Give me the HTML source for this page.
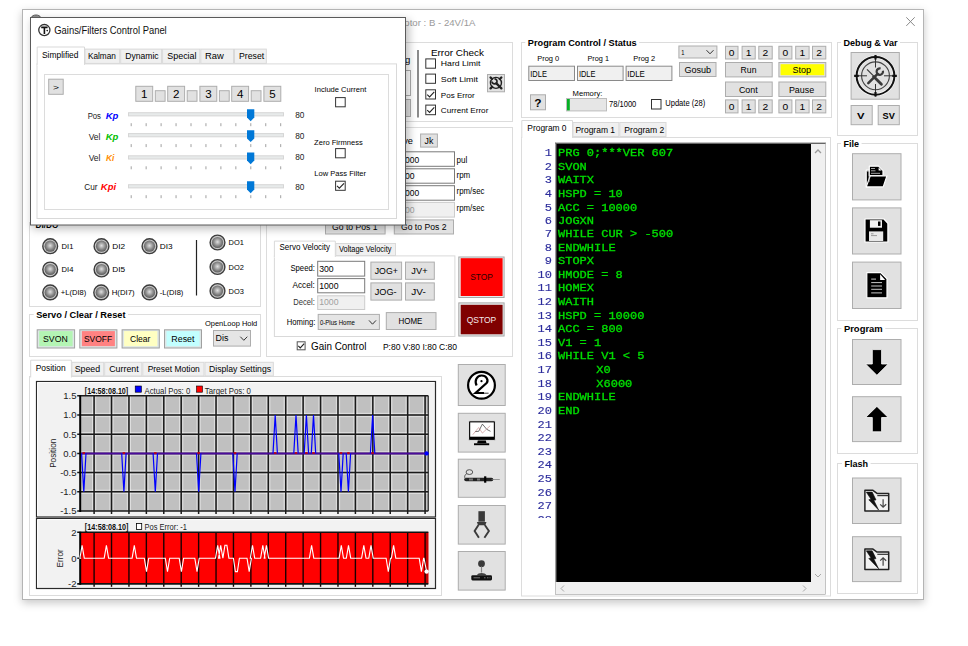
<!DOCTYPE html>
<html><head><meta charset="utf-8"><title>UI</title>
<style>
*{box-sizing:border-box;margin:0;padding:0}
html,body{width:968px;height:646px;overflow:hidden;background:#fff;font-family:"Liberation Sans",sans-serif}
svg{position:absolute;left:0;top:0}
pre{position:absolute;margin:0}
</style></head><body>
<svg width="968" height="646" viewBox="0 0 968 646" font-family="Liberation Sans, sans-serif">
<defs><filter id="sh" x="-10%" y="-10%" width="120%" height="120%"><feGaussianBlur stdDeviation="4"/></filter><filter id="sh2" x="-20%" y="-20%" width="140%" height="140%"><feGaussianBlur stdDeviation="4"/></filter><radialGradient id="led" cx="0.5" cy="0.45" r="0.55"><stop offset="0" stop-color="#e0e0e0"/><stop offset="0.6" stop-color="#8c8c8c"/><stop offset="1" stop-color="#5a5a5a"/></radialGradient></defs>
<rect x="22.00" y="12.00" width="902.00" height="591.00" fill="rgba(0,0,0,0.22)" filter="url(#sh)"/>
<rect x="22.50" y="9.50" width="901.00" height="590.00" fill="#fff" stroke="#b4b4b4" stroke-width="1" />
<text x="404.30" y="26.10" font-size="9.92" fill="#9a9a9a" textLength="71.19" lengthAdjust="spacingAndGlyphs">otor : B - 24V/1A</text>
<line x1="906.30" y1="17.30" x2="914.70" y2="25.90" stroke="#8a8a8a" stroke-width="1.0" />
<line x1="914.70" y1="17.30" x2="906.30" y2="25.90" stroke="#8a8a8a" stroke-width="1.0" />
<rect x="266.50" y="42.50" width="246.00" height="79.00" fill="none" stroke="#dcdcdc" stroke-width="1" />
<line x1="418.00" y1="50.00" x2="418.00" y2="117.50" stroke="#5a5a5a" stroke-width="1.4" />
<rect x="395.00" y="70.50" width="15.50" height="25.00" fill="#fff" stroke="#adadad" stroke-width="1" />
<rect x="395.00" y="99.50" width="15.50" height="17.00" fill="#e1e1e1" stroke="#adadad" stroke-width="1" />
<text x="405.12" y="63.20" font-size="9.50" fill="#000">g</text>
<text x="430.94" y="55.80" font-size="9.22" fill="#000" textLength="53.02" lengthAdjust="spacingAndGlyphs">Error Check</text>
<rect x="425.80" y="58.90" width="9.70" height="9.30" fill="#fff" stroke="#333" stroke-width="1" />
<text x="440.83" y="66.40" font-size="7.40" fill="#000" textLength="39.54" lengthAdjust="spacingAndGlyphs">Hard Limit</text>
<rect x="425.80" y="74.10" width="9.70" height="9.20" fill="#fff" stroke="#333" stroke-width="1" />
<text x="440.83" y="81.60" font-size="7.40" fill="#000" textLength="37.14" lengthAdjust="spacingAndGlyphs">Soft Limit</text>
<rect x="425.80" y="89.80" width="9.70" height="9.20" fill="#fff" stroke="#333" stroke-width="1" />
<polyline points="427.23,94.60 429.58,96.85 434.29,91.95" fill="none" stroke="#222" stroke-width="1.1"/>
<text x="440.83" y="97.50" font-size="7.40" fill="#000" textLength="33.94" lengthAdjust="spacingAndGlyphs">Pos Error</text>
<rect x="425.80" y="105.10" width="9.70" height="9.60" fill="#fff" stroke="#333" stroke-width="1" />
<polyline points="427.23,110.11 429.58,112.44 434.29,107.36" fill="none" stroke="#222" stroke-width="1.1"/>
<text x="440.83" y="112.80" font-size="7.40" fill="#000" textLength="47.54" lengthAdjust="spacingAndGlyphs">Current Error</text>
<rect x="487.50" y="74.50" width="17.00" height="17.30" fill="#e1e1e1" stroke="#adadad" stroke-width="1" />
<rect x="29.50" y="222.50" width="231.00" height="84.00" fill="none" stroke="#dcdcdc" stroke-width="1" />
<text x="35.61" y="227.60" font-size="9.78" font-weight="bold" fill="#000" textLength="22.68" lengthAdjust="spacingAndGlyphs">DI/DO</text>
<line x1="196.50" y1="240.00" x2="196.50" y2="295.50" stroke="#222" stroke-width="1.2" />
<circle cx="50.2" cy="246.2" r="7.4" fill="#c8c8c8" stroke="#3c3c3c" stroke-width="1.4"/>
<circle cx="50.2" cy="246.2" r="5.6" fill="url(#led)"/>
<text x="61.62" y="248.80" font-size="7.68" fill="#000" textLength="11.87" lengthAdjust="spacingAndGlyphs">DI1</text>
<circle cx="101.5" cy="246.2" r="7.4" fill="#c8c8c8" stroke="#3c3c3c" stroke-width="1.4"/>
<circle cx="101.5" cy="246.2" r="5.6" fill="url(#led)"/>
<text x="112.32" y="248.80" font-size="7.68" fill="#000" textLength="12.87" lengthAdjust="spacingAndGlyphs">DI2</text>
<circle cx="149.5" cy="246.2" r="7.4" fill="#c8c8c8" stroke="#3c3c3c" stroke-width="1.4"/>
<circle cx="149.5" cy="246.2" r="5.6" fill="url(#led)"/>
<text x="159.82" y="248.80" font-size="7.68" fill="#000" textLength="12.87" lengthAdjust="spacingAndGlyphs">DI3</text>
<circle cx="50.2" cy="269.5" r="7.4" fill="#c8c8c8" stroke="#3c3c3c" stroke-width="1.4"/>
<circle cx="50.2" cy="269.5" r="5.6" fill="url(#led)"/>
<text x="61.62" y="271.80" font-size="7.68" fill="#000" textLength="11.87" lengthAdjust="spacingAndGlyphs">DI4</text>
<circle cx="101.5" cy="269.5" r="7.4" fill="#c8c8c8" stroke="#3c3c3c" stroke-width="1.4"/>
<circle cx="101.5" cy="269.5" r="5.6" fill="url(#led)"/>
<text x="112.32" y="271.80" font-size="7.68" fill="#000" textLength="12.87" lengthAdjust="spacingAndGlyphs">DI5</text>
<circle cx="50.2" cy="292.4" r="7.4" fill="#c8c8c8" stroke="#3c3c3c" stroke-width="1.4"/>
<circle cx="50.2" cy="292.4" r="5.6" fill="url(#led)"/>
<text x="60.82" y="295.00" font-size="7.68" fill="#000" textLength="25.37" lengthAdjust="spacingAndGlyphs">+L(DI8)</text>
<circle cx="101.2" cy="292.4" r="7.4" fill="#c8c8c8" stroke="#3c3c3c" stroke-width="1.4"/>
<circle cx="101.2" cy="292.4" r="5.6" fill="url(#led)"/>
<text x="111.72" y="295.00" font-size="7.68" fill="#000" textLength="22.87" lengthAdjust="spacingAndGlyphs">H(DI7)</text>
<circle cx="149.5" cy="292.4" r="7.4" fill="#c8c8c8" stroke="#3c3c3c" stroke-width="1.4"/>
<circle cx="149.5" cy="292.4" r="5.6" fill="url(#led)"/>
<text x="159.82" y="295.00" font-size="7.68" fill="#000" textLength="23.57" lengthAdjust="spacingAndGlyphs">-L(DI8)</text>
<circle cx="217.5" cy="242.5" r="7.4" fill="#c8c8c8" stroke="#3c3c3c" stroke-width="1.4"/>
<circle cx="217.5" cy="242.5" r="5.6" fill="url(#led)"/>
<text x="228.62" y="245.10" font-size="7.68" fill="#000" textLength="15.27" lengthAdjust="spacingAndGlyphs">DO1</text>
<circle cx="217.5" cy="267" r="7.4" fill="#c8c8c8" stroke="#3c3c3c" stroke-width="1.4"/>
<circle cx="217.5" cy="267" r="5.6" fill="url(#led)"/>
<text x="228.62" y="269.90" font-size="7.68" fill="#000" textLength="15.27" lengthAdjust="spacingAndGlyphs">DO2</text>
<circle cx="217.5" cy="291" r="7.4" fill="#c8c8c8" stroke="#3c3c3c" stroke-width="1.4"/>
<circle cx="217.5" cy="291" r="5.6" fill="url(#led)"/>
<text x="228.62" y="293.60" font-size="7.68" fill="#000" textLength="15.27" lengthAdjust="spacingAndGlyphs">DO3</text>
<rect x="29.50" y="314.50" width="231.00" height="42.00" fill="none" stroke="#dcdcdc" stroke-width="1" />
<rect x="33.70" y="313.00" width="94.30" height="3.00" fill="#fff" />
<text x="36.21" y="318.10" font-size="9.78" font-weight="bold" fill="#000" textLength="89.28" lengthAdjust="spacingAndGlyphs">Servo / Clear / Reset</text>
<rect x="37.20" y="329.80" width="37.40" height="18.20" fill="#dde6e6" stroke="#a0a0a0" stroke-width="1" />
<rect x="39.20" y="331.10" width="33.40" height="15.10" fill="#b4f5b4" />
<text x="43.05" y="341.70" font-size="9.08" fill="#000" textLength="24.71" lengthAdjust="spacingAndGlyphs">SVON</text>
<rect x="79.80" y="329.80" width="37.10" height="18.20" fill="#dde6e6" stroke="#a0a0a0" stroke-width="1" />
<rect x="81.80" y="331.10" width="33.10" height="15.10" fill="#ff8282" />
<text x="83.95" y="341.70" font-size="9.08" fill="#000" textLength="28.21" lengthAdjust="spacingAndGlyphs">SVOFF</text>
<rect x="122.10" y="329.80" width="37.20" height="18.20" fill="#dde6e6" stroke="#a0a0a0" stroke-width="1" />
<rect x="124.10" y="331.10" width="33.20" height="15.10" fill="#ffffc2" />
<text x="130.05" y="341.70" font-size="9.08" fill="#000" textLength="20.41" lengthAdjust="spacingAndGlyphs">Clear</text>
<rect x="164.50" y="329.80" width="37.00" height="18.20" fill="#dde6e6" stroke="#a0a0a0" stroke-width="1" />
<rect x="166.50" y="331.10" width="33.00" height="15.10" fill="#c2ffff" />
<text x="171.35" y="341.70" font-size="9.08" fill="#000" textLength="23.11" lengthAdjust="spacingAndGlyphs">Reset</text>
<text x="204.94" y="326.40" font-size="7.26" fill="#000" textLength="52.33" lengthAdjust="spacingAndGlyphs">OpenLoop Hold</text>
<rect x="213.50" y="330.50" width="37.00" height="15.60" fill="#e5e5e5" stroke="#adadad" stroke-width="1" />
<text x="215.58" y="341.00" font-size="8.38" fill="#000" textLength="12.84" lengthAdjust="spacingAndGlyphs">Dis</text>
<polyline points="240.30,336.70 243.80,340.30 247.30,336.70" fill="none" stroke="#333" stroke-width="1"/>
<rect x="266.50" y="127.50" width="246.00" height="229.00" fill="none" stroke="#dcdcdc" stroke-width="1" />
<text x="403.17" y="143.70" font-size="8.65" fill="#000" textLength="9.77" lengthAdjust="spacingAndGlyphs">ve</text>
<rect x="420.60" y="134.00" width="16.80" height="13.10" fill="#e1e1e1" stroke="#adadad" stroke-width="1" />
<text x="424.49" y="143.70" font-size="8.24" fill="#000" textLength="8.82" lengthAdjust="spacingAndGlyphs">Jk</text>
<rect x="395.50" y="151.80" width="59.00" height="14.50" fill="#fff" stroke="#7a7a7a" stroke-width="1" />
<text x="400.25" y="162.70" font-size="8.94" fill="#000" textLength="18.89" lengthAdjust="spacingAndGlyphs">1000</text>
<text x="456.56" y="163.30" font-size="8.85" fill="#000" textLength="10.68" lengthAdjust="spacingAndGlyphs">pul</text>
<rect x="395.50" y="168.80" width="59.00" height="14.40" fill="#fff" stroke="#7a7a7a" stroke-width="1" />
<text x="400.25" y="179.30" font-size="8.94" fill="#000" textLength="14.39" lengthAdjust="spacingAndGlyphs">100</text>
<text x="456.56" y="178.00" font-size="8.85" fill="#000" textLength="13.68" lengthAdjust="spacingAndGlyphs">rpm</text>
<rect x="395.50" y="185.70" width="59.00" height="14.50" fill="#fff" stroke="#7a7a7a" stroke-width="1" />
<text x="400.25" y="196.20" font-size="8.94" fill="#000" textLength="18.89" lengthAdjust="spacingAndGlyphs">1000</text>
<text x="456.56" y="194.40" font-size="8.85" fill="#000" textLength="27.88" lengthAdjust="spacingAndGlyphs">rpm/sec</text>
<rect x="395.50" y="202.40" width="59.00" height="14.70" fill="#f0f0f0" stroke="#cccccc" stroke-width="1" />
<text x="400.25" y="213.00" font-size="8.94" fill="#a0a0a0" textLength="14.39" lengthAdjust="spacingAndGlyphs">100</text>
<text x="456.56" y="211.30" font-size="8.85" fill="#000" textLength="27.88" lengthAdjust="spacingAndGlyphs">rpm/sec</text>
<rect x="325.50" y="219.90" width="59.60" height="14.10" fill="#e1e1e1" stroke="#adadad" stroke-width="1" />
<text x="332.04" y="230.00" font-size="9.22" fill="#000" textLength="45.42" lengthAdjust="spacingAndGlyphs">Go to Pos 1</text>
<rect x="394.30" y="219.90" width="59.20" height="14.10" fill="#e1e1e1" stroke="#adadad" stroke-width="1" />
<text x="400.94" y="230.00" font-size="9.22" fill="#000" textLength="45.52" lengthAdjust="spacingAndGlyphs">Go to Pos 2</text>
<rect x="274.40" y="255.90" width="180.50" height="80.60" fill="#fff" stroke="#d9d9d9" stroke-width="1" />
<rect x="335.80" y="243.50" width="59.70" height="12.00" fill="#f0f0f0" stroke="#d9d9d9" stroke-width="1" />
<rect x="274.40" y="241.10" width="60.90" height="16.40" fill="#fff" />
<path d="M274.40,257.00 V241.10 H335.30 V257.00" fill="none" stroke="#d9d9d9" stroke-width="1"/>
<text x="279.57" y="250.20" font-size="8.52" fill="#000" textLength="50.45" lengthAdjust="spacingAndGlyphs">Servo Velocity</text>
<text x="338.97" y="251.50" font-size="8.52" fill="#000" textLength="52.45" lengthAdjust="spacingAndGlyphs">Voltage Velocity</text>
<text x="290.43" y="271.30" font-size="9.36" fill="#000" textLength="24.44" lengthAdjust="spacingAndGlyphs">Speed:</text>
<rect x="317.70" y="261.30" width="47.00" height="14.80" fill="#fff" stroke="#7a7a7a" stroke-width="1" />
<text x="319.17" y="271.90" font-size="8.66" fill="#000" textLength="14.47" lengthAdjust="spacingAndGlyphs">300</text>
<text x="292.45" y="288.30" font-size="8.94" fill="#000" textLength="22.39" lengthAdjust="spacingAndGlyphs">Accel:</text>
<rect x="317.70" y="278.60" width="47.00" height="14.20" fill="#fff" stroke="#7a7a7a" stroke-width="1" />
<text x="319.17" y="288.90" font-size="8.66" fill="#000" textLength="19.37" lengthAdjust="spacingAndGlyphs">1000</text>
<text x="293.27" y="304.90" font-size="8.66" fill="#333" textLength="21.57" lengthAdjust="spacingAndGlyphs">Decel:</text>
<rect x="317.70" y="295.80" width="47.00" height="13.70" fill="#f0f0f0" stroke="#cccccc" stroke-width="1" />
<text x="319.17" y="305.30" font-size="8.66" fill="#a0a0a0" textLength="19.37" lengthAdjust="spacingAndGlyphs">1000</text>
<text x="286.84" y="324.70" font-size="9.22" fill="#000" textLength="28.52" lengthAdjust="spacingAndGlyphs">Homing:</text>
<rect x="318.20" y="314.40" width="61.20" height="15.10" fill="#e5e5e5" stroke="#adadad" stroke-width="1" />
<text x="319.92" y="325.00" font-size="7.54" fill="#000" textLength="34.85" lengthAdjust="spacingAndGlyphs">0-Plus Home</text>
<polyline points="369.00,320.40 372.50,324.20 376.00,320.40" fill="none" stroke="#333" stroke-width="1"/>
<rect x="370.90" y="262.10" width="30.70" height="17.20" fill="#e1e1e1" stroke="#adadad" stroke-width="1" />
<text x="374.75" y="273.80" font-size="8.94" fill="#000" textLength="23.09" lengthAdjust="spacingAndGlyphs">JOG+</text>
<rect x="405.50" y="262.10" width="28.80" height="17.20" fill="#e1e1e1" stroke="#adadad" stroke-width="1" />
<text x="411.35" y="273.80" font-size="8.94" fill="#000" textLength="16.19" lengthAdjust="spacingAndGlyphs">JV+</text>
<rect x="370.90" y="282.90" width="30.70" height="17.20" fill="#e1e1e1" stroke="#adadad" stroke-width="1" />
<text x="374.75" y="294.60" font-size="8.94" fill="#000" textLength="21.89" lengthAdjust="spacingAndGlyphs">JOG-</text>
<rect x="405.50" y="282.90" width="28.80" height="17.20" fill="#e1e1e1" stroke="#adadad" stroke-width="1" />
<text x="411.35" y="294.60" font-size="8.94" fill="#000" textLength="14.49" lengthAdjust="spacingAndGlyphs">JV-</text>
<rect x="386.30" y="312.60" width="49.70" height="16.90" fill="#e1e1e1" stroke="#adadad" stroke-width="1" />
<text x="398.56" y="324.10" font-size="8.80" fill="#000" textLength="23.88" lengthAdjust="spacingAndGlyphs">HOME</text>
<rect x="458.80" y="257.00" width="45.30" height="40.50" fill="#e6ecec" stroke="#a8a8a8" stroke-width="1" />
<rect x="460.70" y="258.20" width="41.90" height="37.80" fill="#ff0000" />
<text x="470.13" y="280.30" font-size="9.50" fill="#2a0000" textLength="22.75" lengthAdjust="spacingAndGlyphs">STOP</text>
<rect x="458.80" y="302.90" width="45.30" height="33.10" fill="#e6ecec" stroke="#a8a8a8" stroke-width="1" />
<rect x="460.70" y="304.80" width="41.90" height="29.50" fill="#800000" />
<text x="466.72" y="322.90" font-size="9.64" fill="#f4e8e8" textLength="29.56" lengthAdjust="spacingAndGlyphs">QSTOP</text>
<rect x="297.20" y="341.80" width="7.90" height="8.00" fill="#fff" stroke="#555" stroke-width="1" />
<polyline points="298.30,345.98 300.26,347.96 304.18,343.64" fill="none" stroke="#222" stroke-width="1.1"/>
<text x="311.09" y="350.30" font-size="10.20" fill="#000" textLength="55.42" lengthAdjust="spacingAndGlyphs">Gain Control</text>
<text x="382.93" y="349.60" font-size="9.50" fill="#000" textLength="74.15" lengthAdjust="spacingAndGlyphs">P:80 V:80 I:80 C:80</text>
<rect x="458.30" y="364.50" width="46.90" height="41.00" fill="#e1e1e1" stroke="#adadad" stroke-width="1" />
<rect x="458.30" y="413.30" width="46.90" height="38.80" fill="#e1e1e1" stroke="#adadad" stroke-width="1" />
<rect x="458.30" y="459.20" width="46.90" height="38.10" fill="#e1e1e1" stroke="#adadad" stroke-width="1" />
<rect x="458.30" y="505.50" width="46.90" height="38.60" fill="#e1e1e1" stroke="#adadad" stroke-width="1" />
<rect x="458.30" y="551.50" width="46.90" height="38.60" fill="#e1e1e1" stroke="#adadad" stroke-width="1" />
<rect x="29.50" y="376.50" width="412.00" height="219.00" fill="#fff" stroke="#dcdcdc" stroke-width="1" />
<rect x="71.90" y="362.30" width="31.80" height="13.70" fill="#f0f0f0" stroke="#d9d9d9" stroke-width="1" />
<text x="74.67" y="371.70" font-size="8.66" fill="#000" textLength="25.47" lengthAdjust="spacingAndGlyphs">Speed</text>
<rect x="104.70" y="362.30" width="37.10" height="13.70" fill="#f0f0f0" stroke="#d9d9d9" stroke-width="1" />
<text x="109.17" y="371.70" font-size="8.66" fill="#000" textLength="29.57" lengthAdjust="spacingAndGlyphs">Current</text>
<rect x="142.80" y="362.30" width="61.20" height="13.70" fill="#f0f0f0" stroke="#d9d9d9" stroke-width="1" />
<text x="147.67" y="371.70" font-size="8.66" fill="#000" textLength="52.17" lengthAdjust="spacingAndGlyphs">Preset Motion</text>
<rect x="205.00" y="362.30" width="68.30" height="13.70" fill="#f0f0f0" stroke="#d9d9d9" stroke-width="1" />
<text x="208.97" y="371.70" font-size="8.66" fill="#000" textLength="62.07" lengthAdjust="spacingAndGlyphs">Display Settings</text>
<rect x="30.70" y="360.20" width="40.70" height="17.80" fill="#fff" />
<path d="M30.70,377.50 V360.20 H71.40 V377.50" fill="none" stroke="#d9d9d9" stroke-width="1"/>
<text x="35.67" y="370.50" font-size="8.66" fill="#000" textLength="29.97" lengthAdjust="spacingAndGlyphs">Position</text>
<rect x="36.50" y="381.50" width="399.00" height="135.50" fill="#f2f2f2" stroke="#2a2a2a" stroke-width="1.2" />
<line x1="37.60" y1="382.60" x2="434.40" y2="382.60" stroke="#fff" stroke-width="1" />
<line x1="37.60" y1="382.60" x2="37.60" y2="515.90" stroke="#fff" stroke-width="1" />
<rect x="36.50" y="518.50" width="399.00" height="70.00" fill="#f2f2f2" stroke="#2a2a2a" stroke-width="1.2" />
<line x1="37.60" y1="519.60" x2="434.40" y2="519.60" stroke="#fff" stroke-width="1" />
<line x1="37.60" y1="519.60" x2="37.60" y2="587.40" stroke="#fff" stroke-width="1" />
<text x="84.85" y="393.50" font-size="8.94" font-weight="bold" fill="#111" textLength="43.39" lengthAdjust="spacingAndGlyphs">[14:58:08.10]</text>
<rect x="135.20" y="386.00" width="6.20" height="6.20" fill="#0000ff" stroke="#000" stroke-width="0.6" />
<text x="144.57" y="393.50" font-size="8.66" fill="#222" textLength="45.67" lengthAdjust="spacingAndGlyphs">Actual Pos: 0</text>
<rect x="196.50" y="386.00" width="6.00" height="6.20" fill="#ff0000" stroke="#000" stroke-width="0.6" />
<text x="204.87" y="393.50" font-size="8.66" fill="#222" textLength="46.07" lengthAdjust="spacingAndGlyphs">Target Pos: 0</text>
<text x="84.85" y="530.00" font-size="8.94" font-weight="bold" fill="#111" textLength="43.59" lengthAdjust="spacingAndGlyphs">[14:58:08.10]</text>
<rect x="136.40" y="523.50" width="5.30" height="6.00" fill="#fff" stroke="#000" stroke-width="0.8" />
<text x="144.57" y="530.00" font-size="8.66" fill="#222" textLength="42.47" lengthAdjust="spacingAndGlyphs">Pos Error: -1</text>
<text transform="translate(55.6,453.3) rotate(-90)" x="0" y="0" font-size="8.2" text-anchor="middle" fill="#222">Position</text>
<text transform="translate(62.5,558.3) rotate(-90)" x="0" y="0" font-size="8.2" text-anchor="middle" fill="#222">Error</text>
<rect x="521.50" y="42.50" width="310.00" height="75.00" fill="none" stroke="#dcdcdc" stroke-width="1" />
<rect x="525.30" y="41.00" width="113.90" height="3.00" fill="#fff" />
<text x="527.83" y="46.20" font-size="9.50" font-weight="bold" fill="#000" textLength="108.85" lengthAdjust="spacingAndGlyphs">Program Control / Status</text>
<text x="537.19" y="61.00" font-size="8.10" fill="#000" textLength="22.11" lengthAdjust="spacingAndGlyphs">Prog 0</text>
<rect x="528.80" y="66.20" width="45.70" height="14.30" fill="#f0f0f0" stroke="#8a8a8a" stroke-width="1" />
<text x="530.29" y="76.80" font-size="8.24" fill="#000" textLength="16.62" lengthAdjust="spacingAndGlyphs">IDLE</text>
<text x="587.49" y="61.00" font-size="8.10" fill="#000" textLength="21.51" lengthAdjust="spacingAndGlyphs">Prog 1</text>
<rect x="577.50" y="66.20" width="45.60" height="14.30" fill="#f0f0f0" stroke="#8a8a8a" stroke-width="1" />
<text x="578.89" y="76.80" font-size="8.24" fill="#000" textLength="16.52" lengthAdjust="spacingAndGlyphs">IDLE</text>
<text x="633.19" y="61.00" font-size="8.10" fill="#000" textLength="22.11" lengthAdjust="spacingAndGlyphs">Prog 2</text>
<rect x="626.10" y="66.20" width="45.80" height="14.30" fill="#f0f0f0" stroke="#8a8a8a" stroke-width="1" />
<text x="627.29" y="76.80" font-size="8.24" fill="#000" textLength="17.52" lengthAdjust="spacingAndGlyphs">IDLE</text>
<rect x="530.50" y="94.80" width="15.00" height="15.00" fill="#e1e1e1" stroke="#adadad" stroke-width="1" />
<text x="534.17" y="106.70" font-size="10.61" font-weight="bold" fill="#000" textLength="7.26" lengthAdjust="spacingAndGlyphs">?</text>
<text x="572.61" y="95.50" font-size="7.82" fill="#000" textLength="29.78" lengthAdjust="spacingAndGlyphs">Memory:</text>
<rect x="566.50" y="98.50" width="40.00" height="12.40" fill="#e6e6e6" stroke="#bcbcbc" stroke-width="1" />
<rect x="567.00" y="99.00" width="2.80" height="11.40" fill="#06b025" />
<text x="609.09" y="107.40" font-size="8.24" fill="#000" textLength="27.22" lengthAdjust="spacingAndGlyphs">78/1000</text>
<rect x="651.50" y="99.50" width="9.50" height="9.50" fill="#fff" stroke="#333" stroke-width="1" />
<text x="665.19" y="106.40" font-size="8.24" fill="#000" textLength="40.02" lengthAdjust="spacingAndGlyphs">Update (28)</text>
<rect x="678.90" y="46.00" width="38.00" height="12.00" fill="#e5e5e5" stroke="#adadad" stroke-width="1" />
<text x="681.15" y="55.00" font-size="6.98" fill="#000" textLength="3.20" lengthAdjust="spacingAndGlyphs">1</text>
<polyline points="706.50,50.20 710.00,53.80 713.50,50.20" fill="none" stroke="#333" stroke-width="1"/>
<rect x="679.50" y="62.50" width="36.50" height="14.00" fill="#e1e1e1" stroke="#adadad" stroke-width="1" />
<text x="684.41" y="73.00" font-size="9.78" fill="#000" textLength="26.78" lengthAdjust="spacingAndGlyphs">Gosub</text>
<rect x="725.50" y="46.30" width="12.50" height="12.70" fill="#e1e1e1" stroke="#adadad" stroke-width="1" />
<text x="728.89" y="56.30" font-size="9.22" fill="#000" textLength="5.72" lengthAdjust="spacingAndGlyphs">0</text>
<rect x="725.50" y="99.90" width="12.50" height="13.00" fill="#e1e1e1" stroke="#adadad" stroke-width="1" />
<text x="728.89" y="109.90" font-size="9.22" fill="#000" textLength="5.72" lengthAdjust="spacingAndGlyphs">0</text>
<rect x="742.10" y="46.30" width="13.10" height="12.70" fill="#e1e1e1" stroke="#adadad" stroke-width="1" />
<text x="745.79" y="56.30" font-size="9.22" fill="#000" textLength="5.72" lengthAdjust="spacingAndGlyphs">1</text>
<rect x="742.10" y="99.90" width="13.10" height="13.00" fill="#e1e1e1" stroke="#adadad" stroke-width="1" />
<text x="745.79" y="109.90" font-size="9.22" fill="#000" textLength="5.72" lengthAdjust="spacingAndGlyphs">1</text>
<rect x="758.80" y="46.30" width="13.40" height="12.70" fill="#e1e1e1" stroke="#adadad" stroke-width="1" />
<text x="762.64" y="56.30" font-size="9.22" fill="#000" textLength="5.72" lengthAdjust="spacingAndGlyphs">2</text>
<rect x="758.80" y="99.90" width="13.40" height="13.00" fill="#e1e1e1" stroke="#adadad" stroke-width="1" />
<text x="762.64" y="109.90" font-size="9.22" fill="#000" textLength="5.72" lengthAdjust="spacingAndGlyphs">2</text>
<rect x="778.90" y="46.30" width="13.00" height="12.70" fill="#e1e1e1" stroke="#adadad" stroke-width="1" />
<text x="782.54" y="56.30" font-size="9.22" fill="#000" textLength="5.72" lengthAdjust="spacingAndGlyphs">0</text>
<rect x="778.90" y="99.90" width="13.00" height="13.00" fill="#e1e1e1" stroke="#adadad" stroke-width="1" />
<text x="782.54" y="109.90" font-size="9.22" fill="#000" textLength="5.72" lengthAdjust="spacingAndGlyphs">0</text>
<rect x="795.70" y="46.30" width="13.40" height="12.70" fill="#e1e1e1" stroke="#adadad" stroke-width="1" />
<text x="799.54" y="56.30" font-size="9.22" fill="#000" textLength="5.72" lengthAdjust="spacingAndGlyphs">1</text>
<rect x="795.70" y="99.90" width="13.40" height="13.00" fill="#e1e1e1" stroke="#adadad" stroke-width="1" />
<text x="799.54" y="109.90" font-size="9.22" fill="#000" textLength="5.72" lengthAdjust="spacingAndGlyphs">1</text>
<rect x="812.50" y="46.30" width="13.30" height="12.70" fill="#e1e1e1" stroke="#adadad" stroke-width="1" />
<text x="816.29" y="56.30" font-size="9.22" fill="#000" textLength="5.72" lengthAdjust="spacingAndGlyphs">2</text>
<rect x="812.50" y="99.90" width="13.30" height="13.00" fill="#e1e1e1" stroke="#adadad" stroke-width="1" />
<text x="816.29" y="109.90" font-size="9.22" fill="#000" textLength="5.72" lengthAdjust="spacingAndGlyphs">2</text>
<rect x="725.50" y="62.50" width="46.70" height="14.40" fill="#e1e1e1" stroke="#adadad" stroke-width="1" />
<text x="740.61" y="73.00" font-size="9.78" fill="#000" textLength="15.88" lengthAdjust="spacingAndGlyphs">Run</text>
<rect x="778.90" y="62.50" width="46.90" height="14.40" fill="#e1e1e1" stroke="#adadad" stroke-width="1" />
<rect x="780.60" y="64.20" width="43.60" height="11.00" fill="#ffff00" />
<text x="792.51" y="73.00" font-size="9.78" fill="#000" textLength="18.48" lengthAdjust="spacingAndGlyphs">Stop</text>
<rect x="725.50" y="82.00" width="46.70" height="14.50" fill="#e1e1e1" stroke="#adadad" stroke-width="1" />
<text x="738.91" y="92.90" font-size="9.78" fill="#000" textLength="18.88" lengthAdjust="spacingAndGlyphs">Cont</text>
<rect x="778.90" y="82.00" width="46.90" height="14.50" fill="#e1e1e1" stroke="#adadad" stroke-width="1" />
<text x="788.91" y="92.90" font-size="9.78" fill="#000" textLength="25.28" lengthAdjust="spacingAndGlyphs">Pause</text>
<rect x="521.50" y="137.50" width="309.00" height="458.50" fill="#fff" stroke="#dcdcdc" stroke-width="1" />
<rect x="573.00" y="122.50" width="45.80" height="14.00" fill="#f0f0f0" stroke="#d9d9d9" stroke-width="1" />
<text x="575.46" y="133.00" font-size="8.80" fill="#000" textLength="39.58" lengthAdjust="spacingAndGlyphs">Program 1</text>
<rect x="619.80" y="122.50" width="46.20" height="14.00" fill="#f0f0f0" stroke="#d9d9d9" stroke-width="1" />
<text x="624.36" y="133.00" font-size="8.80" fill="#000" textLength="39.98" lengthAdjust="spacingAndGlyphs">Program 2</text>
<rect x="521.80" y="120.50" width="50.70" height="18.00" fill="#fff" />
<path d="M521.80,138.00 V120.50 H572.50 V138.00" fill="none" stroke="#d9d9d9" stroke-width="1"/>
<text x="527.36" y="131.30" font-size="8.80" fill="#000" textLength="39.18" lengthAdjust="spacingAndGlyphs">Program 0</text>
<rect x="555.50" y="142.50" width="270.00" height="452.00" fill="#f0f0f0" stroke="#a0a0a0" stroke-width="0.6" />
<rect x="556.00" y="143.00" width="255.00" height="439.00" fill="#000" />
<line x1="556.00" y1="143.00" x2="556.00" y2="582.00" stroke="#7a7a7a" stroke-width="1" />
<line x1="555.50" y1="143.50" x2="825.50" y2="143.50" stroke="#666" stroke-width="1.2" />
<polyline points="815,153 818,150 821,153" fill="none" stroke="#999" stroke-width="1.3"/>
<polyline points="815.00,574.00 818.00,577.00 821.00,574.00" fill="none" stroke="#a8a8a8" stroke-width="1"/>
<polyline points="564,585.5 561,588.5 564,591.5" fill="none" stroke="#a8a8a8" stroke-width="1"/>
<polyline points="803,585.5 806,588.5 803,591.5" fill="none" stroke="#a8a8a8" stroke-width="1"/>
<rect x="837.50" y="42.50" width="80.00" height="93.00" fill="none" stroke="#dcdcdc" stroke-width="1" />
<rect x="841.00" y="41.00" width="59.00" height="3.00" fill="#fff" />
<text x="843.51" y="46.10" font-size="9.78" font-weight="bold" fill="#000" textLength="53.98" lengthAdjust="spacingAndGlyphs">Debug &amp; Var</text>
<rect x="851.10" y="52.50" width="48.20" height="46.70" fill="#e1e1e1" stroke="#adadad" stroke-width="1" />
<rect x="851.10" y="105.50" width="21.10" height="19.20" fill="#e1e1e1" stroke="#adadad" stroke-width="1" />
<text x="857.01" y="118.70" font-size="9.78" font-weight="bold" fill="#000" textLength="7.48" lengthAdjust="spacingAndGlyphs">V</text>
<rect x="878.20" y="105.50" width="21.10" height="19.20" fill="#e1e1e1" stroke="#adadad" stroke-width="1" />
<text x="882.51" y="118.70" font-size="9.78" font-weight="bold" fill="#000" textLength="12.28" lengthAdjust="spacingAndGlyphs">SV</text>
<rect x="837.50" y="143.50" width="80.00" height="177.00" fill="none" stroke="#dcdcdc" stroke-width="1" />
<rect x="841.00" y="142.00" width="20.60" height="3.00" fill="#fff" />
<text x="843.53" y="147.00" font-size="9.50" font-weight="bold" fill="#000" textLength="15.55" lengthAdjust="spacingAndGlyphs">File</text>
<rect x="852.50" y="153.70" width="48.50" height="46.20" fill="#e1e1e1" stroke="#adadad" stroke-width="1" />
<rect x="852.50" y="207.90" width="48.50" height="46.10" fill="#e1e1e1" stroke="#adadad" stroke-width="1" />
<rect x="852.50" y="262.10" width="48.50" height="46.40" fill="#e1e1e1" stroke="#adadad" stroke-width="1" />
<rect x="837.50" y="328.50" width="80.00" height="125.00" fill="none" stroke="#dcdcdc" stroke-width="1" />
<rect x="841.40" y="327.00" width="43.80" height="3.00" fill="#fff" />
<text x="843.93" y="332.40" font-size="9.50" font-weight="bold" fill="#000" textLength="38.75" lengthAdjust="spacingAndGlyphs">Program</text>
<rect x="852.50" y="339.50" width="48.50" height="45.00" fill="#e1e1e1" stroke="#adadad" stroke-width="1" />
<rect x="852.50" y="396.70" width="48.50" height="44.90" fill="#e1e1e1" stroke="#adadad" stroke-width="1" />
<rect x="837.50" y="463.50" width="80.00" height="130.00" fill="none" stroke="#dcdcdc" stroke-width="1" />
<rect x="842.00" y="462.00" width="28.60" height="3.00" fill="#fff" />
<text x="844.53" y="467.30" font-size="9.50" font-weight="bold" fill="#000" textLength="23.55" lengthAdjust="spacingAndGlyphs">Flash</text>
<rect x="852.50" y="478.00" width="48.50" height="45.50" fill="#e1e1e1" stroke="#adadad" stroke-width="1" />
<rect x="852.50" y="536.70" width="48.50" height="44.90" fill="#e1e1e1" stroke="#adadad" stroke-width="1" />
<rect x="80.2" y="395.8" width="348.1" height="115.19999999999999" fill="#c0c0c0"/>
<rect x="425.08000000000004" y="395.8" width="3.2199999999999704" height="115.19999999999999" fill="#9c9c9c"/>
<line x1="92.50" y1="395.8" x2="92.50" y2="511.0" stroke="#fff" stroke-width="0.9" opacity="0.55"/>
<line x1="95.70" y1="395.8" x2="95.70" y2="511.0" stroke="#fff" stroke-width="0.9" opacity="0.55"/>
<line x1="109.92" y1="395.8" x2="109.92" y2="511.0" stroke="#fff" stroke-width="0.9" opacity="0.55"/>
<line x1="113.12" y1="395.8" x2="113.12" y2="511.0" stroke="#fff" stroke-width="0.9" opacity="0.55"/>
<line x1="127.34" y1="395.8" x2="127.34" y2="511.0" stroke="#fff" stroke-width="0.9" opacity="0.55"/>
<line x1="130.54" y1="395.8" x2="130.54" y2="511.0" stroke="#fff" stroke-width="0.9" opacity="0.55"/>
<line x1="144.76" y1="395.8" x2="144.76" y2="511.0" stroke="#fff" stroke-width="0.9" opacity="0.55"/>
<line x1="147.96" y1="395.8" x2="147.96" y2="511.0" stroke="#fff" stroke-width="0.9" opacity="0.55"/>
<line x1="162.18" y1="395.8" x2="162.18" y2="511.0" stroke="#fff" stroke-width="0.9" opacity="0.55"/>
<line x1="165.38" y1="395.8" x2="165.38" y2="511.0" stroke="#fff" stroke-width="0.9" opacity="0.55"/>
<line x1="179.60" y1="395.8" x2="179.60" y2="511.0" stroke="#fff" stroke-width="0.9" opacity="0.55"/>
<line x1="182.80" y1="395.8" x2="182.80" y2="511.0" stroke="#fff" stroke-width="0.9" opacity="0.55"/>
<line x1="197.02" y1="395.8" x2="197.02" y2="511.0" stroke="#fff" stroke-width="0.9" opacity="0.55"/>
<line x1="200.22" y1="395.8" x2="200.22" y2="511.0" stroke="#fff" stroke-width="0.9" opacity="0.55"/>
<line x1="214.44" y1="395.8" x2="214.44" y2="511.0" stroke="#fff" stroke-width="0.9" opacity="0.55"/>
<line x1="217.64" y1="395.8" x2="217.64" y2="511.0" stroke="#fff" stroke-width="0.9" opacity="0.55"/>
<line x1="231.86" y1="395.8" x2="231.86" y2="511.0" stroke="#fff" stroke-width="0.9" opacity="0.55"/>
<line x1="235.06" y1="395.8" x2="235.06" y2="511.0" stroke="#fff" stroke-width="0.9" opacity="0.55"/>
<line x1="249.28" y1="395.8" x2="249.28" y2="511.0" stroke="#fff" stroke-width="0.9" opacity="0.55"/>
<line x1="252.48" y1="395.8" x2="252.48" y2="511.0" stroke="#fff" stroke-width="0.9" opacity="0.55"/>
<line x1="266.70" y1="395.8" x2="266.70" y2="511.0" stroke="#fff" stroke-width="0.9" opacity="0.55"/>
<line x1="269.90" y1="395.8" x2="269.90" y2="511.0" stroke="#fff" stroke-width="0.9" opacity="0.55"/>
<line x1="284.12" y1="395.8" x2="284.12" y2="511.0" stroke="#fff" stroke-width="0.9" opacity="0.55"/>
<line x1="287.32" y1="395.8" x2="287.32" y2="511.0" stroke="#fff" stroke-width="0.9" opacity="0.55"/>
<line x1="301.54" y1="395.8" x2="301.54" y2="511.0" stroke="#fff" stroke-width="0.9" opacity="0.55"/>
<line x1="304.74" y1="395.8" x2="304.74" y2="511.0" stroke="#fff" stroke-width="0.9" opacity="0.55"/>
<line x1="318.96" y1="395.8" x2="318.96" y2="511.0" stroke="#fff" stroke-width="0.9" opacity="0.55"/>
<line x1="322.16" y1="395.8" x2="322.16" y2="511.0" stroke="#fff" stroke-width="0.9" opacity="0.55"/>
<line x1="336.38" y1="395.8" x2="336.38" y2="511.0" stroke="#fff" stroke-width="0.9" opacity="0.55"/>
<line x1="339.58" y1="395.8" x2="339.58" y2="511.0" stroke="#fff" stroke-width="0.9" opacity="0.55"/>
<line x1="353.80" y1="395.8" x2="353.80" y2="511.0" stroke="#fff" stroke-width="0.9" opacity="0.55"/>
<line x1="357.00" y1="395.8" x2="357.00" y2="511.0" stroke="#fff" stroke-width="0.9" opacity="0.55"/>
<line x1="371.22" y1="395.8" x2="371.22" y2="511.0" stroke="#fff" stroke-width="0.9" opacity="0.55"/>
<line x1="374.42" y1="395.8" x2="374.42" y2="511.0" stroke="#fff" stroke-width="0.9" opacity="0.55"/>
<line x1="388.64" y1="395.8" x2="388.64" y2="511.0" stroke="#fff" stroke-width="0.9" opacity="0.55"/>
<line x1="391.84" y1="395.8" x2="391.84" y2="511.0" stroke="#fff" stroke-width="0.9" opacity="0.55"/>
<line x1="406.06" y1="395.8" x2="406.06" y2="511.0" stroke="#fff" stroke-width="0.9" opacity="0.55"/>
<line x1="409.26" y1="395.8" x2="409.26" y2="511.0" stroke="#fff" stroke-width="0.9" opacity="0.55"/>
<line x1="423.48" y1="395.8" x2="423.48" y2="511.0" stroke="#fff" stroke-width="0.9" opacity="0.55"/>
<line x1="426.68" y1="395.8" x2="426.68" y2="511.0" stroke="#fff" stroke-width="0.9" opacity="0.55"/>
<line x1="80.2" y1="413.40" x2="428.3" y2="413.40" stroke="#fff" stroke-width="0.9" opacity="0.55"/>
<line x1="80.2" y1="416.60" x2="428.3" y2="416.60" stroke="#fff" stroke-width="0.9" opacity="0.55"/>
<line x1="80.2" y1="432.60" x2="428.3" y2="432.60" stroke="#fff" stroke-width="0.9" opacity="0.55"/>
<line x1="80.2" y1="435.80" x2="428.3" y2="435.80" stroke="#fff" stroke-width="0.9" opacity="0.55"/>
<line x1="80.2" y1="451.80" x2="428.3" y2="451.80" stroke="#fff" stroke-width="0.9" opacity="0.55"/>
<line x1="80.2" y1="455.00" x2="428.3" y2="455.00" stroke="#fff" stroke-width="0.9" opacity="0.55"/>
<line x1="80.2" y1="471.00" x2="428.3" y2="471.00" stroke="#fff" stroke-width="0.9" opacity="0.55"/>
<line x1="80.2" y1="474.20" x2="428.3" y2="474.20" stroke="#fff" stroke-width="0.9" opacity="0.55"/>
<line x1="80.2" y1="490.20" x2="428.3" y2="490.20" stroke="#fff" stroke-width="0.9" opacity="0.55"/>
<line x1="80.2" y1="493.40" x2="428.3" y2="493.40" stroke="#fff" stroke-width="0.9" opacity="0.55"/>
<line x1="94.10" y1="395.8" x2="94.10" y2="514.0" stroke="#1a1a1a" stroke-width="1.5"/>
<line x1="111.52" y1="395.8" x2="111.52" y2="514.0" stroke="#1a1a1a" stroke-width="1.5"/>
<line x1="128.94" y1="395.8" x2="128.94" y2="514.0" stroke="#1a1a1a" stroke-width="1.5"/>
<line x1="146.36" y1="395.8" x2="146.36" y2="514.0" stroke="#1a1a1a" stroke-width="1.5"/>
<line x1="163.78" y1="395.8" x2="163.78" y2="514.0" stroke="#1a1a1a" stroke-width="1.5"/>
<line x1="181.20" y1="395.8" x2="181.20" y2="514.0" stroke="#1a1a1a" stroke-width="1.5"/>
<line x1="198.62" y1="395.8" x2="198.62" y2="514.0" stroke="#1a1a1a" stroke-width="1.5"/>
<line x1="216.04" y1="395.8" x2="216.04" y2="514.0" stroke="#1a1a1a" stroke-width="1.5"/>
<line x1="233.46" y1="395.8" x2="233.46" y2="514.0" stroke="#1a1a1a" stroke-width="1.5"/>
<line x1="250.88" y1="395.8" x2="250.88" y2="514.0" stroke="#1a1a1a" stroke-width="1.5"/>
<line x1="268.30" y1="395.8" x2="268.30" y2="514.0" stroke="#1a1a1a" stroke-width="1.5"/>
<line x1="285.72" y1="395.8" x2="285.72" y2="514.0" stroke="#1a1a1a" stroke-width="1.5"/>
<line x1="303.14" y1="395.8" x2="303.14" y2="514.0" stroke="#1a1a1a" stroke-width="1.5"/>
<line x1="320.56" y1="395.8" x2="320.56" y2="514.0" stroke="#1a1a1a" stroke-width="1.5"/>
<line x1="337.98" y1="395.8" x2="337.98" y2="514.0" stroke="#1a1a1a" stroke-width="1.5"/>
<line x1="355.40" y1="395.8" x2="355.40" y2="514.0" stroke="#1a1a1a" stroke-width="1.5"/>
<line x1="372.82" y1="395.8" x2="372.82" y2="514.0" stroke="#1a1a1a" stroke-width="1.5"/>
<line x1="390.24" y1="395.8" x2="390.24" y2="514.0" stroke="#1a1a1a" stroke-width="1.5"/>
<line x1="407.66" y1="395.8" x2="407.66" y2="514.0" stroke="#1a1a1a" stroke-width="1.5"/>
<line x1="425.08" y1="395.8" x2="425.08" y2="514.0" stroke="#1a1a1a" stroke-width="1.5"/>
<line x1="77.2" y1="395.80" x2="428.3" y2="395.80" stroke="#1a1a1a" stroke-width="1.5"/>
<line x1="77.2" y1="415.00" x2="428.3" y2="415.00" stroke="#1a1a1a" stroke-width="1.5"/>
<line x1="77.2" y1="434.20" x2="428.3" y2="434.20" stroke="#1a1a1a" stroke-width="1.5"/>
<line x1="77.2" y1="453.40" x2="428.3" y2="453.40" stroke="#1a1a1a" stroke-width="1.5"/>
<line x1="77.2" y1="472.60" x2="428.3" y2="472.60" stroke="#1a1a1a" stroke-width="1.5"/>
<line x1="77.2" y1="491.80" x2="428.3" y2="491.80" stroke="#1a1a1a" stroke-width="1.5"/>
<line x1="77.2" y1="511.00" x2="428.3" y2="511.00" stroke="#1a1a1a" stroke-width="1.5"/>
<line x1="80.2" y1="395.3" x2="80.2" y2="512.0" stroke="#000" stroke-width="2"/>
<line x1="428.3" y1="395.8" x2="428.3" y2="511.0" stroke="#222" stroke-width="1"/>
<text x="76.5" y="399.10" text-anchor="end" font-size="9.5" fill="#222">1.5</text>
<text x="76.5" y="418.30" text-anchor="end" font-size="9.5" fill="#222">1.0</text>
<text x="76.5" y="437.50" text-anchor="end" font-size="9.5" fill="#222">0.5</text>
<text x="76.5" y="456.70" text-anchor="end" font-size="9.5" fill="#222">0.0</text>
<text x="76.5" y="475.90" text-anchor="end" font-size="9.5" fill="#222">-0.5</text>
<text x="76.5" y="495.10" text-anchor="end" font-size="9.5" fill="#222">-1.0</text>
<text x="76.5" y="514.30" text-anchor="end" font-size="9.5" fill="#222">-1.5</text>
<line x1="81.2" y1="453.40" x2="426.8" y2="453.40" stroke="#4a0a9a" stroke-width="2"/>
<polyline points="273.00,453.40 275.20,415.00 277.40,453.40" fill="none" stroke="#0000ff" stroke-width="1.2" stroke-linejoin="miter"/>
<rect x="274.00" y="452.20" width="2.4" height="1.6" fill="#d00000"/>
<polyline points="293.80,453.40 296.00,415.00 298.20,453.40" fill="none" stroke="#0000ff" stroke-width="1.2" stroke-linejoin="miter"/>
<rect x="294.80" y="452.20" width="2.4" height="1.6" fill="#d00000"/>
<polyline points="304.20,453.40 306.40,415.00 308.60,453.40" fill="none" stroke="#0000ff" stroke-width="1.2" stroke-linejoin="miter"/>
<rect x="305.20" y="452.20" width="2.4" height="1.6" fill="#d00000"/>
<polyline points="311.30,453.40 313.50,415.00 315.70,453.40" fill="none" stroke="#0000ff" stroke-width="1.2" stroke-linejoin="miter"/>
<rect x="312.30" y="452.20" width="2.4" height="1.6" fill="#d00000"/>
<polyline points="370.40,453.40 372.60,415.00 374.80,453.40" fill="none" stroke="#0000ff" stroke-width="1.2" stroke-linejoin="miter"/>
<rect x="371.40" y="452.20" width="2.4" height="1.6" fill="#d00000"/>
<polyline points="81.60,453.40 83.80,491.80 86.00,453.40" fill="none" stroke="#0000ff" stroke-width="1.2" stroke-linejoin="miter"/>
<rect x="82.60" y="452.20" width="2.4" height="1.6" fill="#d00000"/>
<polyline points="121.70,453.40 123.90,491.80 126.10,453.40" fill="none" stroke="#0000ff" stroke-width="1.2" stroke-linejoin="miter"/>
<rect x="122.70" y="452.20" width="2.4" height="1.6" fill="#d00000"/>
<polyline points="153.10,453.40 155.30,491.80 157.50,453.40" fill="none" stroke="#0000ff" stroke-width="1.2" stroke-linejoin="miter"/>
<rect x="154.10" y="452.20" width="2.4" height="1.6" fill="#d00000"/>
<polyline points="196.50,453.40 198.70,491.80 200.90,453.40" fill="none" stroke="#0000ff" stroke-width="1.2" stroke-linejoin="miter"/>
<rect x="197.50" y="452.20" width="2.4" height="1.6" fill="#d00000"/>
<polyline points="232.80,453.40 235.00,491.80 237.20,453.40" fill="none" stroke="#0000ff" stroke-width="1.2" stroke-linejoin="miter"/>
<rect x="233.80" y="452.20" width="2.4" height="1.6" fill="#d00000"/>
<polyline points="338.80,453.40 341.00,491.80 343.20,453.40" fill="none" stroke="#0000ff" stroke-width="1.2" stroke-linejoin="miter"/>
<rect x="339.80" y="452.20" width="2.4" height="1.6" fill="#d00000"/>
<polyline points="346.20,453.40 348.40,491.80 350.60,453.40" fill="none" stroke="#0000ff" stroke-width="1.2" stroke-linejoin="miter"/>
<rect x="347.20" y="452.20" width="2.4" height="1.6" fill="#d00000"/>
<circle cx="426.6" cy="453.40" r="2.2" fill="#0000ff"/>
<rect x="80.2" y="532.2" width="348.1" height="51.59999999999991" fill="#ff0000"/>
<rect x="425.08000000000004" y="532.2" width="3.2199999999999704" height="51.59999999999991" fill="#c80000"/>
<line x1="94.10" y1="532.2" x2="94.10" y2="586.8" stroke="#1a0000" stroke-width="1.4"/>
<line x1="111.52" y1="532.2" x2="111.52" y2="586.8" stroke="#1a0000" stroke-width="1.4"/>
<line x1="128.94" y1="532.2" x2="128.94" y2="586.8" stroke="#1a0000" stroke-width="1.4"/>
<line x1="146.36" y1="532.2" x2="146.36" y2="586.8" stroke="#1a0000" stroke-width="1.4"/>
<line x1="163.78" y1="532.2" x2="163.78" y2="586.8" stroke="#1a0000" stroke-width="1.4"/>
<line x1="181.20" y1="532.2" x2="181.20" y2="586.8" stroke="#1a0000" stroke-width="1.4"/>
<line x1="198.62" y1="532.2" x2="198.62" y2="586.8" stroke="#1a0000" stroke-width="1.4"/>
<line x1="216.04" y1="532.2" x2="216.04" y2="586.8" stroke="#1a0000" stroke-width="1.4"/>
<line x1="233.46" y1="532.2" x2="233.46" y2="586.8" stroke="#1a0000" stroke-width="1.4"/>
<line x1="250.88" y1="532.2" x2="250.88" y2="586.8" stroke="#1a0000" stroke-width="1.4"/>
<line x1="268.30" y1="532.2" x2="268.30" y2="586.8" stroke="#1a0000" stroke-width="1.4"/>
<line x1="285.72" y1="532.2" x2="285.72" y2="586.8" stroke="#1a0000" stroke-width="1.4"/>
<line x1="303.14" y1="532.2" x2="303.14" y2="586.8" stroke="#1a0000" stroke-width="1.4"/>
<line x1="320.56" y1="532.2" x2="320.56" y2="586.8" stroke="#1a0000" stroke-width="1.4"/>
<line x1="337.98" y1="532.2" x2="337.98" y2="586.8" stroke="#1a0000" stroke-width="1.4"/>
<line x1="355.40" y1="532.2" x2="355.40" y2="586.8" stroke="#1a0000" stroke-width="1.4"/>
<line x1="372.82" y1="532.2" x2="372.82" y2="586.8" stroke="#1a0000" stroke-width="1.4"/>
<line x1="390.24" y1="532.2" x2="390.24" y2="586.8" stroke="#1a0000" stroke-width="1.4"/>
<line x1="407.66" y1="532.2" x2="407.66" y2="586.8" stroke="#1a0000" stroke-width="1.4"/>
<line x1="425.08" y1="532.2" x2="425.08" y2="586.8" stroke="#1a0000" stroke-width="1.4"/>
<line x1="77.2" y1="532.2" x2="428.3" y2="532.2" stroke="#111" stroke-width="1.4"/>
<line x1="77.2" y1="558.2" x2="80.2" y2="558.2" stroke="#111" stroke-width="1.4"/>
<line x1="77.2" y1="583.8" x2="428.3" y2="583.8" stroke="#111" stroke-width="1.8"/>
<line x1="80.2" y1="531.7" x2="80.2" y2="584.8" stroke="#000" stroke-width="2"/>
<text x="76.5" y="535.50" text-anchor="end" font-size="9.5" fill="#222">2</text>
<text x="76.5" y="561.50" text-anchor="end" font-size="9.5" fill="#222">0</text>
<text x="76.5" y="587.10" text-anchor="end" font-size="9.5" fill="#222">-2</text>
<polyline points="81.20,558.20 79.90,558.20 82.10,545.30 84.30,558.20 104.20,558.20 106.40,545.30 108.60,558.20 132.10,558.20 134.30,545.30 136.50,558.20 144.30,558.20 146.50,571.60 148.70,558.20 165.30,558.20 167.50,571.60 169.70,558.20 179.20,558.20 181.40,571.60 183.60,558.20 194.80,558.20 197.00,571.60 199.20,558.20 215.50,558.20 217.70,545.30 219.90,558.20 218.50,558.20 220.70,545.30 222.90,558.20 222.90,558.20 224.90,545.30 226.90,545.30 228.90,558.20 233.40,558.20 235.40,571.60 237.40,571.60 239.40,558.20 247.00,558.20 249.20,571.60 251.40,558.20 250.30,558.20 252.50,545.30 254.70,558.20 260.60,558.20 262.80,545.30 265.00,558.20 264.20,558.20 266.40,545.30 268.60,558.20 309.40,558.20 311.60,545.30 313.80,558.20 339.10,558.20 341.30,545.30 343.50,558.20 346.30,558.20 348.50,545.30 350.70,558.20 361.60,558.20 363.80,545.30 366.00,558.20 368.80,558.20 371.00,545.30 373.20,558.20 386.10,558.20 388.30,571.60 390.50,558.20 391.40,558.20 393.60,545.30 395.80,558.20 419.20,558.20 421.40,571.60 423.60,558.20 424.00,558.20 426.60,571.60" fill="none" stroke="#ffffff" stroke-width="1.1" stroke-linejoin="miter"/>
<circle cx="426.6" cy="571.6" r="2.2" fill="#fff"/>
<rect x="32.00" y="20.00" width="377.00" height="209.00" fill="rgba(0,0,0,0.26)" filter="url(#sh2)"/>
<path d="M31,17.8 C32.5,14 39.5,14 41,17.8 Z" fill="#8a8a8a" stroke="#444" stroke-width="0.8"/>
<rect x="30.50" y="17.50" width="375.00" height="207.50" fill="#fff" stroke="#5a5a5a" stroke-width="1" />
<circle cx="44.35" cy="30.1" r="5.6" fill="#fff" stroke="#333" stroke-width="1.3"/>
<path d="M41.2,27.4 H47.6 M44.4,27.4 V34" stroke="#111" stroke-width="1.6" fill="none"/><circle cx="47.2" cy="30.6" r="0.8" fill="#111"/>
<text x="54.30" y="33.70" font-size="10.06" fill="#111" textLength="112.41" lengthAdjust="spacingAndGlyphs">Gains/Filters Control Panel</text>
<rect x="37.00" y="63.90" width="359.50" height="154.60" fill="#fff" stroke="#d9d9d9" stroke-width="1" />
<rect x="85.00" y="49.10" width="34.70" height="14.30" fill="#f0f0f0" stroke="#d9d9d9" stroke-width="1" />
<text x="87.95" y="59.20" font-size="8.94" fill="#000" textLength="27.99" lengthAdjust="spacingAndGlyphs">Kalman</text>
<rect x="120.70" y="49.10" width="40.90" height="14.30" fill="#f0f0f0" stroke="#d9d9d9" stroke-width="1" />
<text x="125.25" y="59.20" font-size="8.94" fill="#000" textLength="33.39" lengthAdjust="spacingAndGlyphs">Dynamic</text>
<rect x="162.60" y="49.10" width="37.20" height="14.30" fill="#f0f0f0" stroke="#d9d9d9" stroke-width="1" />
<text x="167.25" y="59.20" font-size="8.94" fill="#000" textLength="29.29" lengthAdjust="spacingAndGlyphs">Special</text>
<rect x="200.80" y="49.10" width="32.70" height="14.30" fill="#f0f0f0" stroke="#d9d9d9" stroke-width="1" />
<text x="205.05" y="59.20" font-size="8.94" fill="#000" textLength="18.79" lengthAdjust="spacingAndGlyphs">Raw</text>
<rect x="234.50" y="49.10" width="31.80" height="14.30" fill="#f0f0f0" stroke="#d9d9d9" stroke-width="1" />
<text x="239.05" y="59.20" font-size="8.94" fill="#000" textLength="25.19" lengthAdjust="spacingAndGlyphs">Preset</text>
<rect x="37.20" y="47.00" width="47.30" height="18.40" fill="#fff" />
<path d="M37.20,64.90 V47.00 H84.50 V64.90" fill="none" stroke="#d9d9d9" stroke-width="1"/>
<text x="42.03" y="57.90" font-size="9.50" fill="#000" textLength="36.45" lengthAdjust="spacingAndGlyphs">Simplified</text>
<rect x="44.50" y="74.50" width="344.00" height="135.00" fill="none" stroke="#dcdcdc" stroke-width="1" />
<rect x="48.70" y="79.20" width="14.50" height="15.10" fill="#e1e1e1" stroke="#adadad" stroke-width="1" />
<text x="52.90" y="89.50" font-size="8.00" fill="#000" textLength="6.00" lengthAdjust="spacingAndGlyphs">&gt;</text>
<rect x="135.80" y="86.30" width="16.90" height="15.00" fill="#e1e1e1" stroke="#adadad" stroke-width="1" />
<text x="141.08" y="97.70" font-size="10.47" fill="#000" textLength="6.45" lengthAdjust="spacingAndGlyphs">1</text>
<rect x="155.30" y="90.70" width="9.80" height="10.60" fill="#e1e1e1" stroke="#adadad" stroke-width="1" />
<rect x="167.70" y="86.30" width="16.90" height="15.00" fill="#e1e1e1" stroke="#adadad" stroke-width="1" />
<text x="172.98" y="97.70" font-size="10.47" fill="#000" textLength="6.45" lengthAdjust="spacingAndGlyphs">2</text>
<rect x="187.20" y="90.70" width="9.80" height="10.60" fill="#e1e1e1" stroke="#adadad" stroke-width="1" />
<rect x="199.90" y="86.30" width="16.90" height="15.00" fill="#e1e1e1" stroke="#adadad" stroke-width="1" />
<text x="205.18" y="97.70" font-size="10.47" fill="#000" textLength="6.45" lengthAdjust="spacingAndGlyphs">3</text>
<rect x="219.40" y="90.70" width="9.80" height="10.60" fill="#e1e1e1" stroke="#adadad" stroke-width="1" />
<rect x="231.70" y="86.30" width="16.90" height="15.00" fill="#e1e1e1" stroke="#adadad" stroke-width="1" />
<text x="236.98" y="97.70" font-size="10.47" fill="#000" textLength="6.45" lengthAdjust="spacingAndGlyphs">4</text>
<rect x="251.20" y="90.70" width="9.80" height="10.60" fill="#e1e1e1" stroke="#adadad" stroke-width="1" />
<rect x="263.90" y="86.30" width="16.90" height="15.00" fill="#e1e1e1" stroke="#adadad" stroke-width="1" />
<text x="269.18" y="97.70" font-size="10.47" fill="#000" textLength="6.45" lengthAdjust="spacingAndGlyphs">5</text>
<text x="87.64" y="118.70" font-size="9.22" fill="#222" textLength="13.32" lengthAdjust="spacingAndGlyphs">Pos</text>
<text x="105.67" y="118.70" font-size="8.66" font-weight="bold" font-style="italic" fill="#0000ff" textLength="12.67" lengthAdjust="spacingAndGlyphs">Kp</text>
<rect x="128.50" y="112.70" width="155.00" height="3.20" fill="#e7eaea" stroke="#d6d6d6" stroke-width="1" />
<line x1="131.20" y1="123.20" x2="131.20" y2="126.20" stroke="#a0a0a0" stroke-width="1" />
<line x1="146.15" y1="123.20" x2="146.15" y2="126.20" stroke="#a0a0a0" stroke-width="1" />
<line x1="161.10" y1="123.20" x2="161.10" y2="126.20" stroke="#a0a0a0" stroke-width="1" />
<line x1="176.05" y1="123.20" x2="176.05" y2="126.20" stroke="#a0a0a0" stroke-width="1" />
<line x1="191.00" y1="123.20" x2="191.00" y2="126.20" stroke="#a0a0a0" stroke-width="1" />
<line x1="205.95" y1="123.20" x2="205.95" y2="126.20" stroke="#a0a0a0" stroke-width="1" />
<line x1="220.90" y1="123.20" x2="220.90" y2="126.20" stroke="#a0a0a0" stroke-width="1" />
<line x1="235.85" y1="123.20" x2="235.85" y2="126.20" stroke="#a0a0a0" stroke-width="1" />
<line x1="250.80" y1="123.20" x2="250.80" y2="126.20" stroke="#a0a0a0" stroke-width="1" />
<line x1="265.75" y1="123.20" x2="265.75" y2="126.20" stroke="#a0a0a0" stroke-width="1" />
<line x1="280.70" y1="123.20" x2="280.70" y2="126.20" stroke="#a0a0a0" stroke-width="1" />
<path d="M247,109.30 H254.3 V117.50 L250.65,121.20 L247,117.50 Z" fill="#0078d7"/>
<text x="88.64" y="140.00" font-size="9.22" fill="#222" textLength="11.72" lengthAdjust="spacingAndGlyphs">Vel</text>
<text x="105.67" y="140.00" font-size="8.66" font-weight="bold" font-style="italic" fill="#00c000" textLength="12.67" lengthAdjust="spacingAndGlyphs">Kp</text>
<rect x="128.50" y="133.60" width="155.00" height="3.20" fill="#e7eaea" stroke="#d6d6d6" stroke-width="1" />
<line x1="131.20" y1="144.10" x2="131.20" y2="147.10" stroke="#a0a0a0" stroke-width="1" />
<line x1="146.15" y1="144.10" x2="146.15" y2="147.10" stroke="#a0a0a0" stroke-width="1" />
<line x1="161.10" y1="144.10" x2="161.10" y2="147.10" stroke="#a0a0a0" stroke-width="1" />
<line x1="176.05" y1="144.10" x2="176.05" y2="147.10" stroke="#a0a0a0" stroke-width="1" />
<line x1="191.00" y1="144.10" x2="191.00" y2="147.10" stroke="#a0a0a0" stroke-width="1" />
<line x1="205.95" y1="144.10" x2="205.95" y2="147.10" stroke="#a0a0a0" stroke-width="1" />
<line x1="220.90" y1="144.10" x2="220.90" y2="147.10" stroke="#a0a0a0" stroke-width="1" />
<line x1="235.85" y1="144.10" x2="235.85" y2="147.10" stroke="#a0a0a0" stroke-width="1" />
<line x1="250.80" y1="144.10" x2="250.80" y2="147.10" stroke="#a0a0a0" stroke-width="1" />
<line x1="265.75" y1="144.10" x2="265.75" y2="147.10" stroke="#a0a0a0" stroke-width="1" />
<line x1="280.70" y1="144.10" x2="280.70" y2="147.10" stroke="#a0a0a0" stroke-width="1" />
<path d="M247,130.20 H254.3 V138.40 L250.65,142.10 L247,138.40 Z" fill="#0078d7"/>
<text x="88.64" y="161.00" font-size="9.22" fill="#222" textLength="11.72" lengthAdjust="spacingAndGlyphs">Vel</text>
<text x="106.07" y="161.00" font-size="8.66" font-weight="bold" font-style="italic" fill="#ff8c00" textLength="8.37" lengthAdjust="spacingAndGlyphs">Ki</text>
<rect x="128.50" y="155.80" width="155.00" height="3.20" fill="#e7eaea" stroke="#d6d6d6" stroke-width="1" />
<line x1="131.20" y1="166.30" x2="131.20" y2="169.30" stroke="#a0a0a0" stroke-width="1" />
<line x1="146.15" y1="166.30" x2="146.15" y2="169.30" stroke="#a0a0a0" stroke-width="1" />
<line x1="161.10" y1="166.30" x2="161.10" y2="169.30" stroke="#a0a0a0" stroke-width="1" />
<line x1="176.05" y1="166.30" x2="176.05" y2="169.30" stroke="#a0a0a0" stroke-width="1" />
<line x1="191.00" y1="166.30" x2="191.00" y2="169.30" stroke="#a0a0a0" stroke-width="1" />
<line x1="205.95" y1="166.30" x2="205.95" y2="169.30" stroke="#a0a0a0" stroke-width="1" />
<line x1="220.90" y1="166.30" x2="220.90" y2="169.30" stroke="#a0a0a0" stroke-width="1" />
<line x1="235.85" y1="166.30" x2="235.85" y2="169.30" stroke="#a0a0a0" stroke-width="1" />
<line x1="250.80" y1="166.30" x2="250.80" y2="169.30" stroke="#a0a0a0" stroke-width="1" />
<line x1="265.75" y1="166.30" x2="265.75" y2="169.30" stroke="#a0a0a0" stroke-width="1" />
<line x1="280.70" y1="166.30" x2="280.70" y2="169.30" stroke="#a0a0a0" stroke-width="1" />
<path d="M247,152.40 H254.3 V160.60 L250.65,164.30 L247,160.60 Z" fill="#0078d7"/>
<text x="84.34" y="190.20" font-size="9.22" fill="#222" textLength="13.22" lengthAdjust="spacingAndGlyphs">Cur</text>
<text x="100.87" y="190.20" font-size="8.66" font-weight="bold" font-style="italic" fill="#ff0000" textLength="15.27" lengthAdjust="spacingAndGlyphs">Kpi</text>
<rect x="128.50" y="184.70" width="155.00" height="3.20" fill="#e7eaea" stroke="#d6d6d6" stroke-width="1" />
<line x1="131.20" y1="195.20" x2="131.20" y2="198.20" stroke="#a0a0a0" stroke-width="1" />
<line x1="146.15" y1="195.20" x2="146.15" y2="198.20" stroke="#a0a0a0" stroke-width="1" />
<line x1="161.10" y1="195.20" x2="161.10" y2="198.20" stroke="#a0a0a0" stroke-width="1" />
<line x1="176.05" y1="195.20" x2="176.05" y2="198.20" stroke="#a0a0a0" stroke-width="1" />
<line x1="191.00" y1="195.20" x2="191.00" y2="198.20" stroke="#a0a0a0" stroke-width="1" />
<line x1="205.95" y1="195.20" x2="205.95" y2="198.20" stroke="#a0a0a0" stroke-width="1" />
<line x1="220.90" y1="195.20" x2="220.90" y2="198.20" stroke="#a0a0a0" stroke-width="1" />
<line x1="235.85" y1="195.20" x2="235.85" y2="198.20" stroke="#a0a0a0" stroke-width="1" />
<line x1="250.80" y1="195.20" x2="250.80" y2="198.20" stroke="#a0a0a0" stroke-width="1" />
<line x1="265.75" y1="195.20" x2="265.75" y2="198.20" stroke="#a0a0a0" stroke-width="1" />
<line x1="280.70" y1="195.20" x2="280.70" y2="198.20" stroke="#a0a0a0" stroke-width="1" />
<path d="M247,181.30 H254.3 V189.50 L250.65,193.20 L247,189.50 Z" fill="#0078d7"/>
<text x="295.15" y="118.00" font-size="9.08" fill="#222" textLength="9.21" lengthAdjust="spacingAndGlyphs">80</text>
<text x="295.15" y="138.80" font-size="9.08" fill="#222" textLength="9.21" lengthAdjust="spacingAndGlyphs">80</text>
<text x="295.15" y="160.20" font-size="9.08" fill="#222" textLength="9.21" lengthAdjust="spacingAndGlyphs">80</text>
<text x="295.15" y="189.50" font-size="9.08" fill="#222" textLength="9.21" lengthAdjust="spacingAndGlyphs">80</text>
<text x="314.64" y="92.10" font-size="7.26" fill="#000" textLength="51.73" lengthAdjust="spacingAndGlyphs">Include Current</text>
<rect x="335.60" y="97.60" width="9.60" height="9.20" fill="#fff" stroke="#333" stroke-width="1" />
<text x="314.14" y="145.00" font-size="7.26" fill="#000" textLength="48.63" lengthAdjust="spacingAndGlyphs">Zero Firmness</text>
<rect x="335.60" y="148.60" width="9.60" height="9.20" fill="#fff" stroke="#333" stroke-width="1" />
<text x="314.34" y="175.90" font-size="7.26" fill="#000" textLength="51.73" lengthAdjust="spacingAndGlyphs">Low Pass Filter</text>
<rect x="335.60" y="181.20" width="9.60" height="9.10" fill="#fff" stroke="#333" stroke-width="1" />
<polyline points="337.01,185.95 339.34,188.17 344.00,183.33" fill="none" stroke="#222" stroke-width="1.1"/>
<g id="icons">
<!-- error check search/wrench icon -->
<g stroke="#222" fill="none">
<circle cx="495.95" cy="82.9" r="5.5" stroke-width="1.4"/>
<path d="M490.6,77.5 l1.5,1.5 M501.3,77.5 l-1.5,1.5 M490.6,88.3 l1.5,-1.5" stroke-width="2.4" stroke-linecap="round"/>
<path d="M496.4,83.4 L501.4,88.4" stroke-width="2.3" stroke-linecap="round"/>
<path d="M494.45,78.95 A2.5,2.5 0 1 1 492.0,81.4" stroke-width="1.7"/>
</g>
<!-- debug & var crosshair icon -->
<g fill="none">
<circle cx="875.5" cy="75.8" r="18.9" stroke="#fff" stroke-width="3"/>
<circle cx="875.5" cy="75.8" r="18.9" stroke="#111" stroke-width="2"/>
<circle cx="875.5" cy="75.8" r="13.9" stroke="#444" stroke-width="1.1"/>
<path d="M875.5,55 V67.5 M875.5,84 V96.5 M854.5,75.8 H867 M884,75.8 H896.5" stroke="#333" stroke-width="1"/>
<path d="M875.5,55 V59.5 M875.5,92 V96.5 M854.2,75.8 H858.7 M892.3,75.8 H896.8" stroke="#111" stroke-width="2.2"/>
<path d="M867,69.4 L873,75.4" stroke="#3a3a3a" stroke-width="1.2"/>
<path d="M873.6,76.6 L881.4,84.2" stroke="#3a3a3a" stroke-width="2.8" stroke-linecap="round"/>
<path d="M868.3,83.2 L877.6,73.9" stroke="#3a3a3a" stroke-width="2.5" stroke-linecap="round"/>
<path d="M882.9,70.77 A3.2,3.2 0 1 1 880.63,68.51" stroke="#3a3a3a" stroke-width="2.2"/>
</g>
<!-- open folder -->
<g stroke="#fff" stroke-width="1.2" stroke-linejoin="round">
<path d="M866.2,170.2 H870 V186.9 H866.2 Z" fill="#000"/>
<path d="M869.3,166.2 H878.6 L883,170.6 V175.6 H869.3 Z" fill="#000"/>
<path d="M870.2,175.8 H887 L883.2,186.9 H866.3 Z" fill="#000"/>
</g>
<path d="M867.3,171.5 H869 V182" stroke="#bbb" stroke-width="0.8" fill="none"/>
<path d="M871,168.5 H875 M871,170.8 H875.5 M871,173.3 H880" stroke="#ccc" stroke-width="0.8"/>
<path d="M878.6,167.6 L881.6,170.6 H878.6 Z" fill="#fff"/>
<!-- save floppy -->
<path d="M865,219 H883.9 L887.9,223.4 V242 H865 Z" fill="#000" stroke="#fff" stroke-width="1.2" stroke-linejoin="round"/>
<rect x="869.9" y="220.2" width="12.1" height="7.5" fill="#f4f4f4"/>
<rect x="878" y="221.5" width="2.5" height="4.4" fill="#000"/>
<rect x="869" y="231.4" width="14.2" height="9.6" fill="#e8e8e8"/>
<path d="M871,233.8 H873.5 M871,235.6 H877" stroke="#777" stroke-width="0.7"/>
<!-- new doc -->
<path d="M866.8,272.7 H880.8 L887,278.9 V297.8 H866.8 Z" fill="#000" stroke="#fff" stroke-width="1.2" stroke-linejoin="round"/>
<path d="M880.1,274.3 V279.9 H885.1 Z" fill="#fff"/>
<path d="M871.2,279.1 H876 M871.2,282.6 H882 M871.2,286 H882 M871.2,289.3 H882 M871.2,292.9 H882" stroke="#c8c8c8" stroke-width="1"/>
<!-- program arrows -->
<path d="M872.3,349.6 H881.6 V364 H888.2 L876.9,375.3 L865.6,364 H872.3 Z" fill="#000" stroke="#fff" stroke-width="0.8"/>
<path d="M876.9,406.4 L888.2,417.5 H881.6 V431.8 H872.3 V417.5 H865.6 Z" fill="#000" stroke="#fff" stroke-width="0.8"/>
<!-- flash icons -->
<g>
<path d="M864.9,490.2 H872.6 L877.0,493.4 H888.7 V510.9 H864.9 Z" fill="#f2f2f2" stroke="#222" stroke-width="1.5" stroke-linejoin="round"/>
<path d="M877.3,495.6 H888.5" stroke="#333" stroke-width="1.2"/>
<path d="M866.3,492.1 H872.2 L876.0,499.9 L873.8,500.3 L878.6,510.0 L868.8,499.8 L871.0,499.2 Z" fill="#111" stroke="#111" stroke-width="0.6" stroke-linejoin="round"/>
</g>
<path d="M883.1,499.2 V507 M880.2,504.3 L883.1,507.2 L886.2,504.3" stroke="#444" stroke-width="1.2" fill="none"/>
<g transform="translate(0,58.7)">
<path d="M864.9,490.2 H872.6 L877.0,493.4 H888.7 V510.9 H864.9 Z" fill="#f2f2f2" stroke="#222" stroke-width="1.5" stroke-linejoin="round"/>
<path d="M877.3,495.6 H888.5" stroke="#333" stroke-width="1.2"/>
<path d="M866.3,492.1 H872.2 L876.0,499.9 L873.8,500.3 L878.6,510.0 L868.8,499.8 L871.0,499.2 Z" fill="#111" stroke="#111" stroke-width="0.6" stroke-linejoin="round"/>
</g>
<path d="M883.1,565.8 V558 M880.2,560.7 L883.1,557.8 L886.2,560.7" stroke="#444" stroke-width="1.2" fill="none"/>
<!-- "2" circle icon -->
<circle cx="481.5" cy="385.2" r="13.4" fill="#fff" stroke="#000" stroke-width="2.2"/>
<path d="M476.6,385.4 C474.2,380.5 476.8,375.8 481.5,375.5 C486.6,375.4 488.8,380.3 486.6,383 L475.6,393 H484" stroke="#000" stroke-width="2.2" fill="none"/>
<path d="M484,393.2 H488.6" stroke="#333" stroke-width="1" fill="none"/>
<circle cx="481.5" cy="381.2" r="1.1" fill="#000"/>
<!-- monitor -->
<rect x="468.6" y="420.8" width="26.8" height="19.6" rx="1.2" fill="#000" stroke="#fff" stroke-width="0.8"/>
<rect x="470.2" y="422.4" width="23.6" height="14.3" fill="#fff"/>
<path d="M477.8,440.6 H485.8 L486.5,443.3 H477.1 Z" fill="#000"/>
<rect x="474" y="443.3" width="15.2" height="1.9" fill="#000"/>
<polyline points="475,431.6 478.7,431.3 482.4,424.1 486.8,429.4 490.5,431.3" fill="none" stroke="#333" stroke-width="0.7"/>
<polyline points="472.8,434.7 478.7,427.5 482.4,433.1 490.2,425.7" fill="none" stroke="#c08080" stroke-width="0.6"/>
<!-- probe -->
<path d="M466,479.5 H491.5" stroke="#222" stroke-width="3.6" stroke-linecap="round"/>
<path d="M469,479.5 H473 M477,479.5 H480" stroke="#777" stroke-width="2.2"/>
<path d="M485.2,476.3 V482.7" stroke="#000" stroke-width="2.2"/>
<path d="M491.5,479.5 H499.8" stroke="#777" stroke-width="0.7"/>
<ellipse cx="469.4" cy="472.1" rx="3.3" ry="2.4" fill="none" stroke="#444" stroke-width="0.9"/>
<path d="M466.8,473.5 C463.8,475.5 464.2,478.5 466.5,479" stroke="#444" stroke-width="0.9" fill="none"/>
<!-- gripper -->
<rect x="478.4" y="511.2" width="6.5" height="10.5" fill="#3a3a3a"/>
<path d="M476.9,522 H486.5 L485.3,525.3 H478.1 Z" fill="#3a3a3a"/>
<path d="M478.5,525 L474.6,531 L478.9,537.8 M484.8,525 L488.9,531 L484.4,537.8" stroke="#3a3a3a" stroke-width="1.9" fill="none" stroke-linejoin="miter"/>
<!-- joystick -->
<circle cx="481.5" cy="563.7" r="3.4" fill="#3a3a3a"/>
<path d="M481.5,566.5 V572.5" stroke="#888" stroke-width="1.2"/>
<path d="M476.9,575.2 C478,572.2 485,572.2 486.5,575.2 Z" fill="#444"/>
<rect x="471.3" y="575.3" width="20.7" height="5.1" rx="1.3" fill="#111"/>
<path d="M473.5,577.8 H480 M484,577.8 H485.5 M487,577.8 H488.5 M489.5,577.8 H490.5" stroke="#777" stroke-width="1"/>
</g>

</svg>
<div style="position:absolute;left:521px;top:147.2px;width:31px;height:370.5px;overflow:hidden"><pre style="left:0;top:0;width:31px;text-align:right;font-family:'Liberation Mono',monospace;font-weight:bold;font-size:12px;line-height:15.63px;transform:scaleY(0.87);transform-origin:0 0;font-weight:normal;-webkit-text-stroke:0.15px #2b2b9b;color:#2b2b9b">1
2
3
4
5
6
7
8
9
10
11
12
13
14
15
16
17
18
19
20
21
22
23
24
25
26
27
28</pre></div>
<pre style="left:558px;top:147.2px;font-family:'Liberation Mono',monospace;font-weight:bold;font-size:12px;line-height:15.63px;transform:scaleY(0.87);transform-origin:0 0;font-weight:normal;-webkit-text-stroke:0.4px #00dc00;color:#00dc00">PRG 0;***VER 607
SVON
WAITX
HSPD = 10
ACC = 10000
JOGXN
WHILE CUR &gt; -500
ENDWHILE
STOPX
HMODE = 8
HOMEX
WAITH
HSPD = 10000
ACC = 800
V1 = 1
WHILE V1 &lt; 5
     <span style="margin-left:2.3px">X0</span>
     <span style="margin-left:2.3px">X6000</span>
ENDWHILE
END</pre>
</body></html>
